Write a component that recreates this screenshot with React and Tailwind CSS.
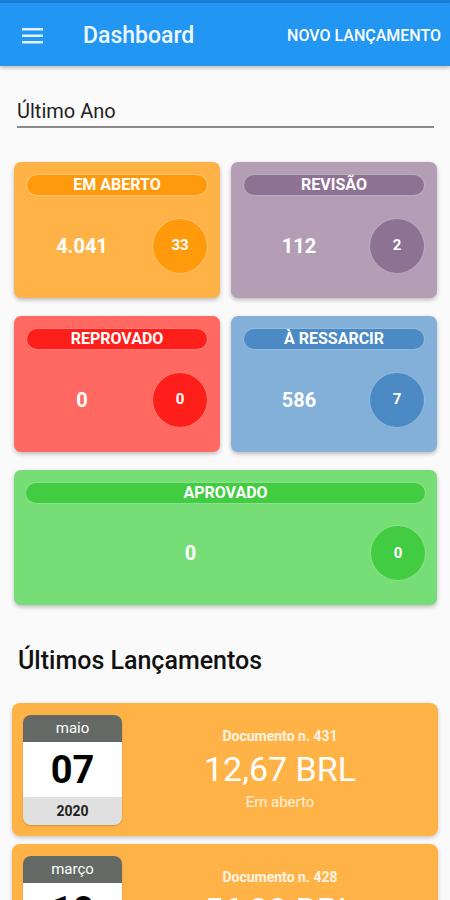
const stats = [
  { label: "EM ABERTO", value: "4.041", count: "33", card: "bg-[#ffb347]", pill: "bg-[#ff9a0d]" },
  { label: "REVISÃO", value: "112", count: "2", card: "bg-[#b39eb5]", pill: "bg-[#8e7294]" },
  { label: "REPROVADO", value: "0", count: "0", card: "bg-[#ff6961]", pill: "bg-[#ff1f1a]" },
  { label: "À RESSARCIR", value: "586", count: "7", card: "bg-[#82b0d8]", pill: "bg-[#4b8ac4]" },
  { label: "APROVADO", value: "0", count: "0", card: "bg-[#77dd77]", pill: "bg-[#41cc41]", wide: true },
];

const entries = [
  { month: "maio", day: "07", year: "2020", doc: "431", amount: "12,67 BRL", status: "Em aberto" },
  { month: "março", day: "10", year: "2020", doc: "428", amount: "56,00 BRL", status: "Em aberto" },
];

function StatCard({ s }) {
  return (
    <div
      className={`${s.card} ${s.wide ? "col-span-2 h-[135px] px-[11px]" : "h-[136px] px-[12px]"} rounded-[7px] shadow-[0_2px_4px_rgba(0,0,0,0.25)] pt-[12px] flex flex-col`}
    >
      <div
        className={`${s.pill} h-[22px] rounded-full border border-white/40 flex items-center justify-center text-white text-[16px] font-bold leading-none`}
      >
        {s.label}
      </div>
      <div className="flex-1 flex items-center pb-[3px]">
        <div className="flex-1 text-center pr-[14px] text-white text-[20px] font-bold">
          {s.value}
        </div>
        <div
          className={`${s.pill} w-[56px] h-[56px] rounded-full border border-white/40 flex items-center justify-center text-white text-[15px] font-bold`}
        >
          {s.count}
        </div>
      </div>
    </div>
  );
}

function EntryCard({ e }) {
  return (
    <div className="bg-[#ffb347] rounded-[8px] shadow-[0_2px_4px_rgba(0,0,0,0.2)] h-[133px] pl-[11px] pt-[12px] flex shrink-0">
      <div className="w-[99px] h-[110px] rounded-[8px] overflow-hidden flex flex-col shadow-[0_1px_2px_rgba(0,0,0,0.2)]">
        <div className="h-[27px] bg-[#646966] text-white text-[15px] flex items-center justify-center">
          {e.month}
        </div>
        <div className="h-[55px] bg-white text-black text-[38px] font-bold flex items-center justify-center leading-none">
          {e.day}
        </div>
        <div className="flex-1 bg-[#e0e0e0] text-[#222] text-[14px] font-bold flex items-center justify-center">
          {e.year}
        </div>
      </div>
      <div className="flex-1 flex flex-col items-center pt-[12px] text-white">
        <div className="text-[14px] font-bold text-white/85 leading-[18px]">Documento n. {e.doc}</div>
        <div className="text-[34px] leading-[40px] mt-[4px]">{e.amount}</div>
        <div className="text-[15px] text-white/80 leading-[20px] mt-[3px]">{e.status}</div>
      </div>
    </div>
  );
}

export default function App() {
  return (
    <div className="w-[450px] h-[900px] overflow-hidden bg-[#fafafa] flex flex-col font-['Roboto',sans-serif]">
      <div className="h-[3px] bg-[#1a7fd6] shrink-0" />
      <div className="h-[63px] pt-[3px] bg-[#2196f3] flex items-center shrink-0 shadow-[0_2px_4px_rgba(0,0,0,0.25)] z-10">
        <svg width="22" height="16" viewBox="0 0 22 16" className="ml-[22px]">
          <rect x="0" y="0" width="21" height="2.5" fill="#e3f2fd" />
          <rect x="0" y="6.5" width="21" height="2.5" fill="#e3f2fd" />
          <rect x="0" y="13" width="21" height="2.5" fill="#e3f2fd" />
        </svg>
        <div className="ml-[39px] text-[23px] font-medium text-[#eef6fe]">Dashboard</div>
        <div className="ml-auto mr-[9px] text-[16px] font-medium text-white">NOVO LANÇAMENTO</div>
      </div>

      <div className="px-[17px] pt-[31px] shrink-0">
        <div className="text-[20px] text-[#222] leading-[28px] border-b-[2px] border-[#8a8a8a] pb-[1px] mr-[-1px]">
          Último Ano
        </div>
      </div>

      <div className="grid grid-cols-2 gap-x-[11px] gap-y-[18px] pl-[14px] pr-[13px] mt-[34px] shrink-0">
        {stats.map((s) => (
          <StatCard key={s.label} s={s} />
        ))}
      </div>

      <div className="px-[18px] mt-[40px] text-[25px] font-medium text-[#111] leading-[32px] shrink-0">
        Últimos Lançamentos
      </div>

      <div className="flex flex-col gap-[8px] px-[12px] mt-[26px]">
        {entries.map((e) => (
          <EntryCard key={e.doc} e={e} />
        ))}
      </div>
    </div>
  );
}
